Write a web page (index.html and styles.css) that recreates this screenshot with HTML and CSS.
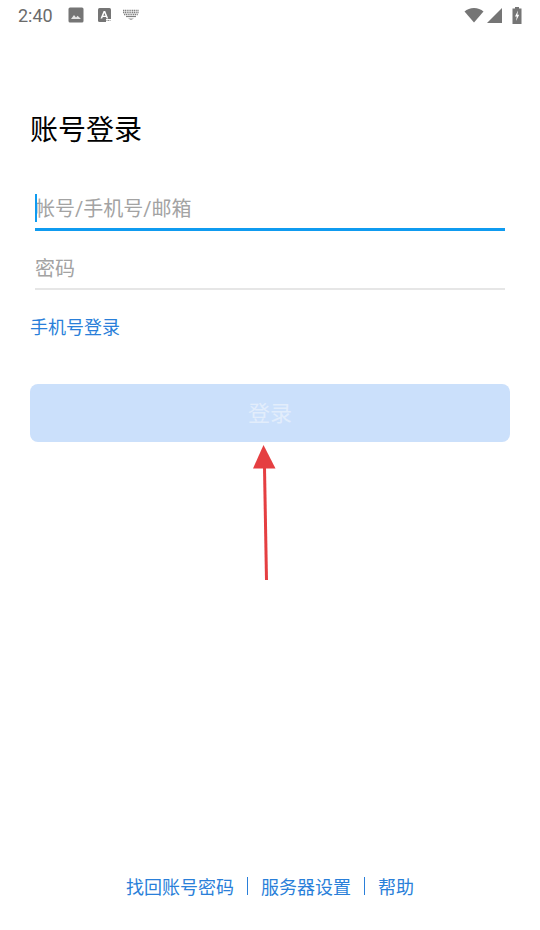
FILE: index.html
```html
<!DOCTYPE html>
<html lang='zh-CN'>
<head>
  <meta charset='UTF-8'>
  <title>账号登录</title>
  <link rel="stylesheet" href="styles.css">
</head>
<body>
  <div class='status-bar'>
    <span class='time'>2:40</span>
    <svg class='icon-photo' width='16' height='16' viewBox='0 0 16 16'>
      <rect x='0.5' y='0.5' width='15' height='15' rx='1.500' fill='#757575'/>
      <path d='M3 12l3-4 2 2.400 1.600-1.600L13 12z' fill='#e4e4e4'/>
    </svg>
    <svg class='icon-app' width='13' height='14' viewBox='0 0 13 14'>
      <rect width='13' height='14' rx='1.500' fill='#757575'/>
      <path d='M2.500 10.500L5.600 3h1.600l3 7.500H8.600L8 9H4.800l-.6 1.500zM5.300 7.700h2.200L6.400 5z' fill='#fff'/>
      <rect x='8' y='11' width='5' height='3' fill='#fff'/>
      <path d='M8.500 12.500h4' stroke='#888' stroke-width='1' stroke-dasharray='1 .6'/>
    </svg>
    <svg class='icon-keyboard' width='16' height='12' viewBox='0 0 16 12'>
      <path d='M0 1.500h16M0 3.500h16M1 5.500h14' stroke='#808080' stroke-width='1.300' stroke-dasharray='1.200 .6'/>
      <path d='M3 7.500h10' stroke='#808080' stroke-width='1.200'/>
      <path d='M5 9.500l3 1.500 3-1.500z' fill='#999'/>
    </svg>
    <span class='status-spacer'></span>
    <svg class='icon-wifi' width='20' height='16' viewBox='0 0 20 16'>
      <path d='M0.500 4.500C3 2.300 6.300 1 10 1s7 1.300 9.500 3.500L10 15.500z' fill='#757575'/>
    </svg>
    <svg class='icon-signal' width='15' height='15' viewBox='0 0 15 15'>
      <path d='M15 0v15H0z' fill='#757575'/>
    </svg>
    <svg class='icon-battery' width='10' height='17' viewBox='0 0 10 17'>
      <path d='M3 0h4v1.500h2.500V17H.5V1.500H3z' fill='#757575'/>
      <path d='M6 3.500L3 9.500h1.800L4 14l3.200-6.200H5.400z' fill='#fff'/>
    </svg>
  </div>

  <div class='login'>
    <h1>账号登录</h1>
    <div class='field field-active'>
      <span class='caret'></span>
      <span class='placeholder'>帐号/手机号/邮箱</span>
    </div>
    <div class='field'>
      <span class='placeholder'>密码</span>
    </div>
    <a class='phone-login'>手机号登录</a>
    <div class='btn-wrap'>
      <button class='submit' type='button' disabled>登录</button>
      <!-- annotation arrow over the page -->
      <svg class='arrow' width='30' height='140' viewBox='0 0 30 140'>
        <path d='M14.500 24L16.500 136' stroke='#e53f41' stroke-width='3' fill='none'/>
        <path d='M13.500 1L25.500 24.500H3z' fill='#e53f41'/>
      </svg>
    </div>
  </div>

  <div class='footer'>
    <a>找回账号密码</a>
    <span class='sep'></span>
    <a>服务器设置</a>
    <span class='sep'></span>
    <a>帮助</a>
  </div>
</body>
</html>
```

FILE: styles.css
```css
* {
  box-sizing: border-box;
}

html, body {
  height: 100%;
}

body {
  background-color: #fff;
  display: flex;
  flex-direction: column;
  height: 930px;
  margin: 0;
  font-family: Roboto, "Noto Sans CJK SC", sans-serif;
  overflow: hidden;
}

.status-bar {
  display: flex;
  align-items: center;
  height: 30px;
  padding: 0 18px;
  flex-shrink: 0;
}

.time {
  font-size: 18px;
  color: #6b6b6b;
  margin-top: 1px;
  margin-right: 15px;
}

.icon-app {
  margin-left: 14px;
}

.icon-keyboard {
  margin-left: 12px;
}

.status-spacer {
  flex: 1;
}

.icon-signal {
  margin-left: 3px;
}

.icon-battery {
  margin-left: 10px;
}

.login {
  padding: 0 30px;
  flex: 1;
}

.login h1 {
  font-size: 28px;
  font-weight: 400;
  line-height: 40px;
  color: #000;
  margin: 81px 0 0 0;
}

.field {
  display: flex;
  align-items: center;
  height: 59px;
  margin: 0 5px;
  padding-top: 15px;
  border-bottom: 2px solid #e6e6e6;
  position: relative;
}

.field-active {
  margin-top: 20px;
  border-bottom: 3px solid #0f9bf0;
  height: 60px;
}

.placeholder {
  font-size: 20px;
  color: #a3a3a3;
}

.caret {
  position: absolute;
  left: 0;
  top: 23px;
  width: 2px;
  height: 28px;
  background: #0f9bf0;
}

.phone-login {
  display: block;
  font-size: 18px;
  line-height: 26px;
  color: #2a7fd9;
  margin-top: 25px;
}

.btn-wrap {
  position: relative;
  margin-top: 43px;
}

.submit {
  display: block;
  width: 100%;
  height: 58px;
  padding: 0 0 4px 0;
  border: none;
  border-radius: 8px;
  background: #cbe0fb;
  color: #e2edfb;
  font-family: inherit;
  font-size: 22px;
}

.arrow {
  position: absolute;
  left: 220px;
  top: 60px;
}

.footer {
  display: flex;
  align-items: center;
  justify-content: center;
  height: 26px;
  margin-bottom: 31px;
  flex-shrink: 0;
}

.footer a {
  font-size: 18px;
  color: #2a7fd9;
}

.sep {
  width: 1px;
  height: 18px;
  background: #2a7fd9;
  margin: 0 13px;
}
```
